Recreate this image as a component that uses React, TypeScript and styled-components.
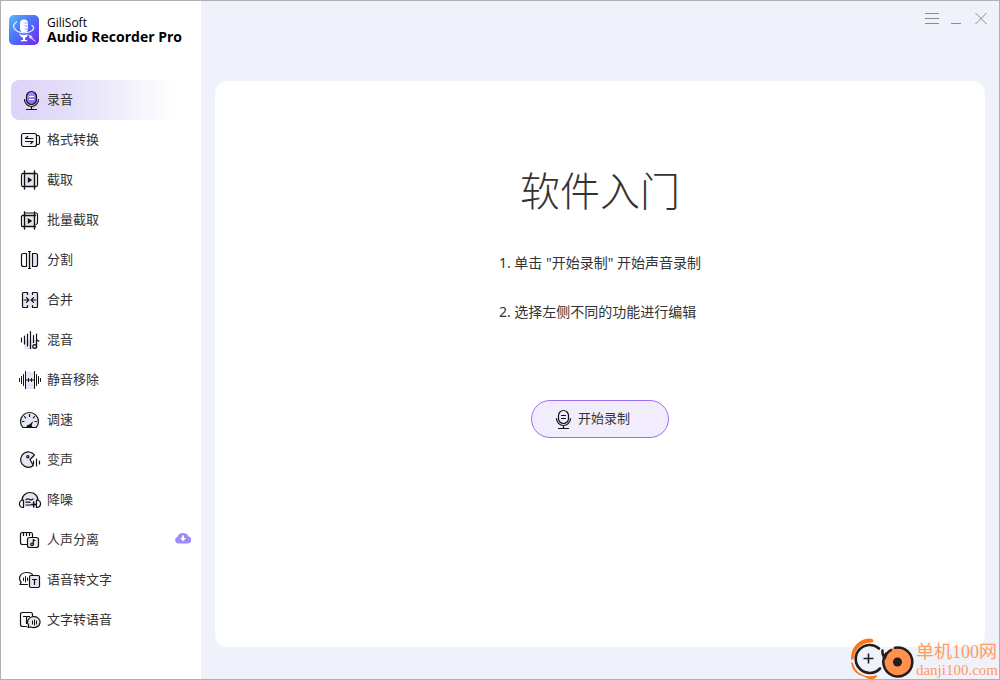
import React from "react";
import styled, { createGlobalStyle } from "styled-components";

const GlobalStyle = createGlobalStyle`
  *, *::before, *::after { box-sizing: border-box; }
  body {
    margin: 0;
    color: #333;
    font-family: "Noto Sans", "Noto Sans CJK SC", sans-serif;
    font-size: 13px;
  }
  button { font: inherit; color: inherit; border: 0; background: none; padding: 0; cursor: pointer; }
`;

const Window = styled.div`
  position: relative;
  display: grid;
  grid-template-columns: 200px 1fr;
  min-height: 100vh;
  border: 1px solid #b0b0b0;
  background: #eff2fa;
`;

const Sidebar = styled.aside`
  background: #fff;
`;

const Brand = styled.div`
  display: flex;
  align-items: center;
  gap: 8px;
  height: 58px;
  padding: 0 8px;
  color: #000;
`;

const BrandName = styled.div`
  display: flex;
  flex-direction: column;
  font-family: "Open Sans", "Noto Sans", sans-serif;
  font-size: 12px;
  line-height: 14px;
  white-space: nowrap;
`;

const Product = styled.strong`
  font-size: 14px;
  font-weight: 700;
`;

const Nav = styled.nav`
  display: flex;
  flex-direction: column;
  padding: 21px 10px;
`;

const NavItem = styled.button<{ $active?: boolean }>`
  display: flex;
  align-items: center;
  gap: 5px;
  height: 40px;
  padding-left: 7px;
  border-radius: 8px;
  text-align: left;
  background: ${(p) => (p.$active ? "linear-gradient(90deg, #dcd4f8 0%, #e2dcf9 28%, #fff 92%)" : "none")};
`;

const Label = styled.span`
  flex: 1;
  padding-bottom: 2px;
  line-height: 20px;
  text-align: left;
`;

const Main = styled.main`
  display: flex;
  flex-direction: column;
`;

const TitleBar = styled.header`
  display: flex;
  justify-content: flex-end;
  height: 80px;
  padding: 5px 7px;
`;

const WindowButton = styled.button`
  display: grid;
  place-items: center;
  width: 24px;
  height: 24px;
`;

const Card = styled.section`
  flex: 1;
  display: flex;
  flex-direction: column;
  align-items: center;
  margin: 0 14px 32px;
  padding-top: 78px;
  border-radius: 12px;
  background: #fff;
`;

const Heading = styled.h1`
  margin: 0;
  font-family: "Noto Sans CJK SC", sans-serif;
  font-size: 40px;
  font-weight: 300;
  line-height: 60px;
`;

const Steps = styled.ol`
  display: flex;
  flex-direction: column;
  gap: 29px;
  margin: 34px 0 0;
  padding: 0;
  list-style: none;
  font-size: 14px;
  line-height: 20px;
`;

const StartButton = styled.button`
  display: flex;
  align-items: center;
  gap: 4px;
  width: 138px;
  height: 38px;
  margin-top: 78px;
  padding: 0 18px;
  border: 1px solid #9b6ff5;
  border-radius: 19px;
  background: #f2edfc;
`;

const Watermark = styled.div`
  position: absolute;
  right: 1px;
  bottom: 0;
  display: flex;
  align-items: flex-end;
  gap: 1px;
  color: #ff9a62;
`;

const WatermarkText = styled.div`
  display: flex;
  flex-direction: column;
  font-family: "Liberation Serif", "Noto Sans CJK SC", serif;
  font-size: 15px;
  line-height: 18px;
  white-space: nowrap;
`;

const SiteName = styled.span`
  font-size: 18px;
`;

const IconSvg = styled.svg`
  flex: none;
  display: block;
  fill: none;
  stroke: #111;
  stroke-width: 1.2;
  stroke-linecap: round;
  stroke-linejoin: round;
`;

const TINT = "#e3e6f3";

function Icon({ children }: { children: React.ReactNode }) {
  return (
    <IconSvg width="24" height="24" viewBox="0 0 24 24" aria-hidden="true">
      {children}
    </IconSvg>
  );
}

function MicIcon({ filled }: { filled?: boolean }) {
  return (
    <Icon>
      <defs>
        <linearGradient id="micFill" x1="0" y1="0" x2="1" y2="1">
          <stop offset="0" stopColor="#b48cf8" />
          <stop offset="1" stopColor="#8168f5" />
        </linearGradient>
      </defs>
      <rect x="8.5" y="3.5" width="10" height="13" rx="5" fill={filled ? "url(#micFill)" : "none"} />
      <path d="M6.5 11.5a7 7 0 0 0 14 0M13.5 18.5v3M8.5 21.5h10" />
      <path d="M11.5 8.5h4M11.5 11.5h4" stroke={filled ? "#fff" : "#111"} />
    </Icon>
  );
}

const icons: Record<string, React.ReactNode> = {
  convert: (
    <Icon>
      <rect x="3.5" y="5.5" width="15" height="13" rx="2" fill="#f1f2f9" />
      <path d="M18.5 7.5h1.5a1.5 1.5 0 0 1 1.5 1.5v6a1.5 1.5 0 0 1-1.5 1.5h-1.5" />
      <path d="M15 10.5H7.5L9.7 8.5M7.5 13.5H15L12.8 15.5" />
    </Icon>
  ),
  trim: (
    <Icon>
      <rect x="6.5" y="5.5" width="10" height="13" fill={TINT} stroke="none" />
      <path d="M5 5.5h13M5 18.5h13M6.5 3v18M16.5 3v18" strokeWidth="1.4" />
      <path d="M5 5.5q-1.5 0-1.5 1.5v10q0 1.5 1.5 1.5M18 5.5q1.5 0 1.5 1.5v10q0 1.5-1.5 1.5" />
      <path d="M9.8 9v6l4.4-3z" fill="#111" stroke="none" />
    </Icon>
  ),
  batch: (
    <Icon>
      <rect x="6.5" y="7.500" width="10" height="11" fill={TINT} stroke="none" />
      <path d="M6.5 4v17M16.5 4v17M4.5 7.500h13M4.5 18.5h13" strokeWidth="1.4" />
      <path d="M4.5 7.500q-1 0-1 1v9q0 1 1 1M17 5h1q1.500 0 1.500 1.500v8q0 1.500-1.500 2" />
      <path d="M7.500 5h8" />
      <path d="M9.800 10v6l4.400-3z" fill="#111" stroke="none" />
    </Icon>
  ),
  split: (
    <Icon>
      <path d="M8.5 5.5H5.5q-2 0-2 2v9q0 2 2 2h3z" />
      <path d="M14.5 5.5h3q2 0 2 2v9q0 2-2 2h-3z" fill={TINT} />
      <path d="M11.5 3.5v17" strokeWidth="1.4" />
      <path d="M10.5 3.5h2M10.5 20.5h2" />
    </Icon>
  ),
  merge: (
    <Icon>
      <rect x="4.5" y="4.5" width="15" height="15" fill={TINT} stroke="none" />
      <path d="M9.5 6.5v-2h-4q-1 0-1 1v13q0 1 1 1h4v-2M14.5 6.5v-2h4q1 0 1 1v13q0 1-1 1h-4v-2" />
      <path d="M6 12h4.5M8.5 9.7l2.3 2.3-2.3 2.3M18 12h-4.5M15.5 9.7l-2.3 2.3 2.3 2.3" />
    </Icon>
  ),
  mix: (
    <Icon>
      <rect x="6" y="12" width="14" height="9" rx="2" fill={TINT} stroke="none" />
      <path d="M3.5 10v4M6.5 8v8M9.5 6v12M12.5 3.5v17M15.5 7.5v7M18.5 6v12.5M18.5 11.5q1.5 1.8 2.5 1.5" />
      <circle cx="16.7" cy="18.5" r="1.9" />
    </Icon>
  ),
  silence: (
    <Icon>
      <rect x="7.5" y="4" width="9" height="17" fill={TINT} stroke="none" />
      <path
        d="M1.5 10.5v3M3.5 8.5v7M5.5 6.5v11M7.5 3.5v17M16.5 3.5v17M18.5 6.5v11M20.5 8.5v7M22.5 10.5v3M7.5 12h9M10.500 10.500v3M13.500 10.500v3"
        strokeWidth="1"
      />
    </Icon>
  ),
  speed: (
    <Icon>
      <path d="M5 19.5q-2.5-2.5-2.5-6a9 9 0 0 1 18 0q0 3.5-2.5 6z" fill={TINT} />
      <path d="M11.5 6.5v2M6.5 8.700l1.200 1.200M16.500 8.700l-1.200 1.200M4.500 13.500h1.500M17 13.500h1.500" />
      <path d="M8 19.500q1-3 3.500-3l3.800-3.500-1.800 4.500q1 .7 1 2z" fill="#111" stroke="none" />
    </Icon>
  ),
  voice: (
    <Icon>
      <path d="M16.500 7a7.700 7.700 0 1 0-1.200 10.500L12 11.500z" fill={TINT} />
      <circle cx="9.800" cy="8.800" r="1.100" />
      <path d="M15.500 13v3M18.500 11v7M21.500 13v3" />
    </Icon>
  ),
  denoise: (
    <Icon>
      <path d="M4.5 12.5V12a7.5 7.5 0 0 1 15 0v.5l-1 6.5h-13z" fill={TINT} stroke="none" />
      <path d="M4 12a8 7.500 0 0 1 16 0M5.500 12v7.500q-4 0-4-3.700T5.500 12zM18.500 12v7.500q4 0 4-3.700T18.500 12z" />
      <path d="M8 11.500q1.700-1.300 3.300-.2t3.700-.3M8 14.200h4M8 17h4.500" />
      <path d="M15.700 14v5M13.500 16.500h4.500" strokeWidth="1.500" />
    </Icon>
  ),
  vocals: (
    <Icon>
      <path d="M9.5 16.5h-5q-2 0-2-2v-8q0-2 2-2h8q2 0 2 2v3" />
      <path d="M5.5 5v2.5M8.5 5v2.5M11.5 5v2.5" />
      <rect x="9.5" y="9.5" width="11" height="10" rx="2" fill={TINT} />
      <circle cx="14" cy="16.3" r="1.3" />
      <path d="M15.3 16.3v-4.8q.3 1 1.7 1" />
    </Icon>
  ),
  speechToText: (
    <Icon>
      <path d="M9.5 16.5H2l1.2-2.2A5.8 5.8 0 0 1 1.5 10.5q.5-6 7.5-6 4 0 5.5 2" />
      <path d="M5.500 10v2.500M7.500 8.500v5.500M9.500 10v2.500" strokeWidth="1" />
      <rect x="11.5" y="7.5" width="10" height="12" rx="1.5" fill={TINT} />
      <path d="M14.5 11.5h4M16.5 11.5v5" />
    </Icon>
  ),
  textToSpeech: (
    <Icon>
      <path d="M8.5 18.5h-4q-2 0-2-2v-10q0-2 2-2h8q2 0 2 2v1.5" />
      <path d="M5.5 8.5h6M8.5 8.5v7" />
      <path d="M10.7 17.3A6.3 5.5 0 1 1 13 19l-3 .5z" fill={TINT} />
      <path d="M14.5 13v3M16.5 12v5M18.5 13v3" strokeWidth="1" />
    </Icon>
  ),
};

const items: { label: string; icon: React.ReactNode; download?: boolean }[] = [
  { label: "录音", icon: <MicIcon filled /> },
  { label: "格式转换", icon: icons.convert },
  { label: "截取", icon: icons.trim },
  { label: "批量截取", icon: icons.batch },
  { label: "分割", icon: icons.split },
  { label: "合并", icon: icons.merge },
  { label: "混音", icon: icons.mix },
  { label: "静音移除", icon: icons.silence },
  { label: "调速", icon: icons.speed },
  { label: "变声", icon: icons.voice },
  { label: "降噪", icon: icons.denoise },
  { label: "人声分离", icon: icons.vocals, download: true },
  { label: "语音转文字", icon: icons.speechToText },
  { label: "文字转语音", icon: icons.textToSpeech },
];

function Logo() {
  return (
    <svg width="30" height="30" viewBox="0 0 30 30" aria-hidden="true">
      <defs>
        <linearGradient id="logoFill" x1="0" y1="0" x2="1" y2="1">
          <stop offset="0" stopColor="#5cb8fb" />
          <stop offset="0.4" stopColor="#4b7cf6" />
          <stop offset="1" stopColor="#7420f5" />
        </linearGradient>
      </defs>
      <rect width="30" height="30" rx="5" fill="url(#logoFill)" />
      <rect x="11" y="4.5" width="8" height="13" rx="4" fill="#fff" />
      <path d="M15.500 8h3.500M15.500 11h3.500M15.500 14h3.500" stroke="#6a8ff8" strokeWidth="0.800" />
      <path d="M10 18.500q5 3 9.500 0l-2 3.500-1.500 1v2h2v1.300h-6V25h2v-2q-3-1-4-4.500z" fill="#fff" />
      <path d="M7.500 7q-4 2.500-2.500 6 2.500 4.500 9.500 4.800 8-.2 10-3.800.5-2-1.500-3.500" fill="none" stroke="#dff0ff" strokeWidth="1.300" strokeLinecap="round" />
      <path d="M20 20l2.500 1 .8 2.300 3 3.200-3.200-2.700-2.300-1z" fill="#e9dcff" stroke="#e9dcff" strokeWidth="0.700" />
    </svg>
  );
}

function CloudDownload() {
  return (
    <svg width="16" height="20" viewBox="0 0 16 20" aria-hidden="true">
      <path d="M3.5 13.5A3.5 3.5 0 0 1 2.500 6.700 5.700 5.200 0 0 1 13.300 6.200a3.700 3.700 0 0 1-.8 7.300z" fill="#9c8cfa" />
      <path d="M7 5.500h2V8h2L8 11.300 5 8h2z" fill="#fff" />
    </svg>
  );
}

function WatermarkLogo() {
  return (
    <svg width="64" height="41" viewBox="0 0 64 41" aria-hidden="true">
      <path d="M19 .5Q24 1 21.500 4.500 15 4 10 7.500 3.500 12.500 2.500 21L0 22Q-.5 9 9 3.500 13 .5 19 .5z" fill="#ff7415" />
      <path d="M0 24.500l2 .5q1.500 7 7 10.500 7 4.500 17 1.500 0 3-4 4-5 .5-9-2.500Q1.500 36 0 24.500z" fill="#ff7415" />
      <path d="M28 10.500a14 14 0 1 0 1 20" fill="none" stroke="#231d1d" strokeWidth="2.600" strokeLinecap="round" />
      <path d="M17.500 15.500v10M12.500 20.500h10" stroke="#231d1d" strokeWidth="1.600" />
      <circle cx="46.500" cy="24" r="14.500" fill="#ff914d" />
      <path d="M44 9.700a14.500 14.500 0 1 1-9 5.800" fill="none" stroke="#231d1d" strokeWidth="2.500" strokeLinecap="round" />
      <path d="M31.500 12.500q-.5 5 2.500 7 1.500-5 6-7.500" fill="none" stroke="#231d1d" strokeWidth="2.500" strokeLinecap="round" />
      <circle cx="46.500" cy="24" r="4.500" fill="#231d1d" />
    </svg>
  );
}

export default function App() {
  return (
    <Window>
      <GlobalStyle />
      <Sidebar>
        <Brand>
          <Logo />
          <BrandName>
            <span>GiliSoft</span>
            <Product>Audio Recorder Pro</Product>
          </BrandName>
        </Brand>
        <Nav>
          {items.map((item, i) => (
            <NavItem key={item.label} type="button" $active={i === 0}>
              {item.icon}
              <Label>{item.label}</Label>
              {item.download && <CloudDownload />}
            </NavItem>
          ))}
        </Nav>
      </Sidebar>
      <Main>
        <TitleBar>
          <WindowButton type="button" aria-label="菜单">
            <svg width="24" height="24" stroke="#8c8c8c">
              <path d="M5 7.5h14M5 12.5h14M5 17.5h14" />
            </svg>
          </WindowButton>
          <WindowButton type="button" aria-label="最小化">
            <svg width="24" height="24" stroke="#8c8c8c">
              <path d="M7 17.5h10" />
            </svg>
          </WindowButton>
          <WindowButton type="button" aria-label="关闭">
            <svg width="24" height="24" stroke="#8c8c8c">
              <path d="M7.5 7l11 11M18.5 7l-11 11" />
            </svg>
          </WindowButton>
        </TitleBar>
        <Card>
          <Heading>软件入门</Heading>
          <Steps>
            <li>1. 单击 "开始录制" 开始声音录制</li>
            <li>2. 选择左侧不同的功能进行编辑</li>
          </Steps>
          <StartButton type="button">
            <MicIcon />
            <Label>开始录制</Label>
          </StartButton>
        </Card>
      </Main>
      <Watermark>
        <WatermarkLogo />
        <WatermarkText>
          <SiteName>单机100网</SiteName>
          <span>danji100.com</span>
        </WatermarkText>
      </Watermark>
    </Window>
  );
}
